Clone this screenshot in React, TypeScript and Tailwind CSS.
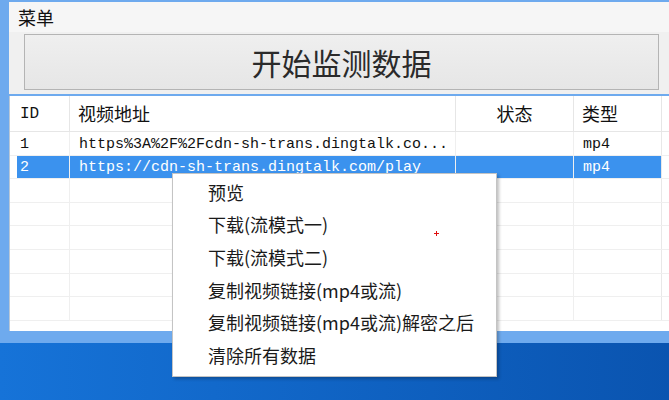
const mono = { fontFamily: '"Liberation Mono", "Noto Sans CJK SC", monospace' }

const cjk = '[font-family:"Noto_Sans_CJK_SC","Liberation_Sans",sans-serif]'

const rows = [
  { id: "1", url: "https%3A%2F%2Fcdn-sh-trans.dingtalk.co...", status: "", type: "mp4" },
  { id: "2", url: "https://cdn-sh-trans.dingtalk.com/play", status: "", type: "mp4", selected: true },
]

const menuItems = [
  "预览",
  "下载(流模式一)",
  "下载(流模式二)",
  "复制视频链接(mp4或流)",
  "复制视频链接(mp4或流)解密之后",
  "清除所有数据",
]

function Row({ id, url, status, type, selected }: { id: string; url: string; status: string; type: string; selected?: boolean }) {
  return (
    <div className="flex h-[23.6px] border-b border-[#efefef] text-[15px] leading-none" style={mono}>
      <div className="w-[7px] shrink-0" />
      <div className={`flex w-[53px] shrink-0 items-center pl-[3px] pt-[2px] border-r border-[#efefef] ${selected ? "bg-[#3b92ee] text-white" : "text-[#111]"}`}>
        {id}
      </div>
      <div className={`flex w-[386px] shrink-0 items-center pl-[9px] pt-[2px] whitespace-nowrap overflow-hidden border-r border-[#efefef] ${selected ? "bg-[#3b92ee] text-white" : "text-[#111]"}`}>
        {url}
      </div>
      <div className={`w-[118px] shrink-0 border-r border-[#efefef] ${selected ? "bg-[#3b92ee]" : ""}`}>{status}</div>
      <div className={`flex w-[88px] shrink-0 items-center pl-[9px] pt-[2px] border-r border-[#e8e8e8] ${selected ? "bg-[#3b92ee] text-white" : "text-[#111]"}`}>
        {type}
      </div>
      <div className="flex-1" />
    </div>
  )
}

function EmptyRow() {
  return (
    <div className="flex h-[23.6px] border-b border-[#efefef]">
      <div className="w-[60px] shrink-0 border-r border-[#efefef]" />
      <div className="w-[386px] shrink-0 border-r border-[#efefef]" />
      <div className="w-[118px] shrink-0 border-r border-[#efefef]" />
      <div className="w-[88px] shrink-0 border-r border-[#e8e8e8]" />
      <div className="flex-1" />
    </div>
  )
}

export default function App() {
  return (
    <div className="relative flex h-[400px] w-[669px] flex-col overflow-hidden bg-gradient-to-r from-[#1673d8] to-[#0a54b0]">
      {/* window */}
      <div className="flex flex-col bg-[#6eaaee] pl-[9px] pt-[2px] pb-[12px]">
        {/* top panel */}
        <div className="flex h-[92px] flex-col bg-[#f0f0f0]">
          <div className={`flex h-[30px] items-center bg-[#f6f6f6] pl-[9px] text-[18px] text-[#111] ${cjk}`}>菜单</div>
          <div className="flex flex-1 pl-[15px] pr-[10px] pt-[2px] pb-[2px]">
            <button className={`flex h-[56px] flex-1 items-center justify-center border border-[#b4b4b4] bg-gradient-to-b from-[#efefef] to-[#e6e6e6] text-[30px] text-[#2a2a2a] ${cjk}`}>
              开始监测数据
            </button>
          </div>
        </div>
        <div className="h-[2px]" />
        {/* table */}
        <div className="flex h-[235px] flex-col border-l border-[#b9c7d6] bg-white">
          <div className="flex h-[36px] border-b border-[#e6e6e6] text-[#111]">
            <div className="flex w-[60px] shrink-0 items-center pl-[10px] border-r border-[#e6e6e6] text-[16px]" style={mono}>
              ID
            </div>
            <div className={`flex w-[386px] shrink-0 items-center pl-[8px] border-r border-[#e6e6e6] text-[18px] ${cjk}`}>视频地址</div>
            <div className={`flex w-[118px] shrink-0 items-center justify-center border-r border-[#e6e6e6] text-[18px] ${cjk}`}>状态</div>
            <div className={`flex w-[88px] shrink-0 items-center pl-[8px] border-r border-[#e6e6e6] text-[18px] ${cjk}`}>类型</div>
            <div className="flex-1" />
          </div>
          {rows.map((r) => (
            <Row key={r.id} {...r} />
          ))}
          {Array.from({ length: 6 }).map((_, i) => (
            <EmptyRow key={i} />
          ))}
        </div>
      </div>

      {/* context menu */}
      <div className={`absolute left-[172px] top-[173px] flex h-[204px] w-[325px] flex-col border border-[#c4c4c4] bg-white pt-[2px] shadow-[2px_2px_3px_rgba(0,0,0,0.25)] ${cjk}`}>
        {menuItems.map((m) => (
          <div key={m} className="flex h-[32.6px] items-center pl-[35px] text-[18px] text-[#1a1a1a]">
            {m}
          </div>
        ))}
      </div>

      {/* cursor mark */}
      <div className="absolute left-[434px] top-[231px] h-[5px] w-[5px]">
        <div className="absolute left-[2px] top-0 h-[5px] w-[1px] bg-[#e01010]" />
        <div className="absolute left-0 top-[2px] h-[1px] w-[5px] bg-[#e01010]" />
      </div>
    </div>
  )
}
